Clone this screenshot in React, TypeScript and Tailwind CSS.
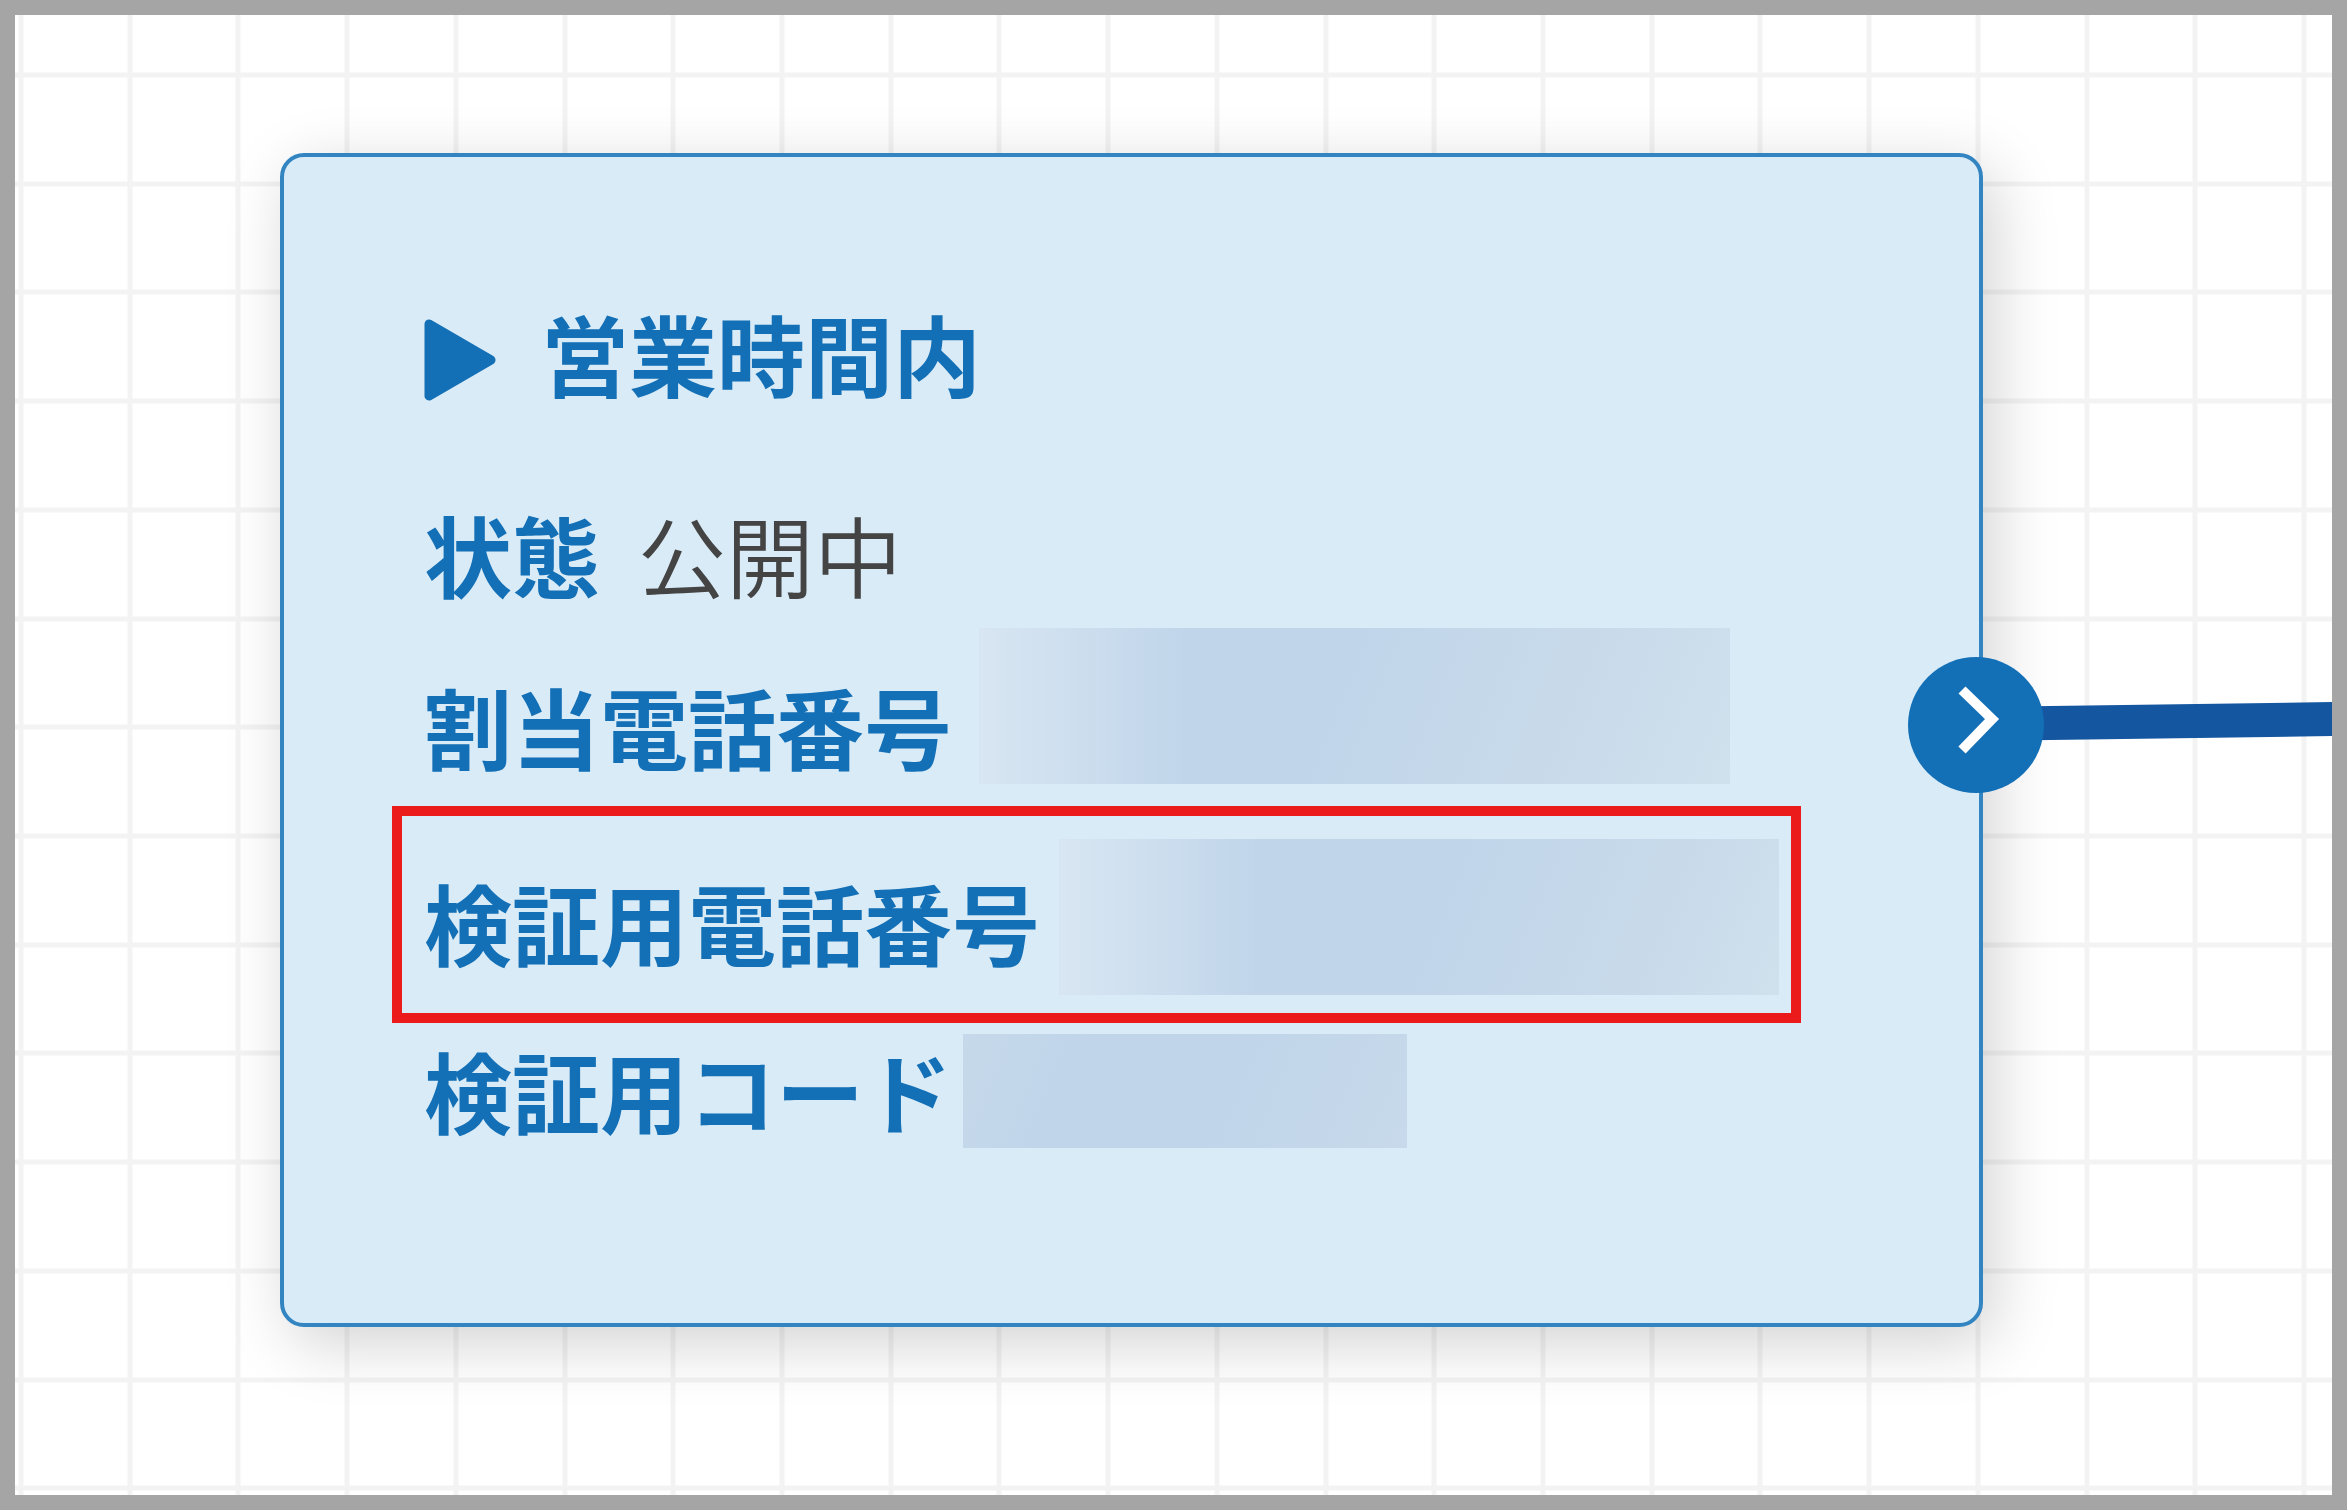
import type { ReactNode } from "react";

const GRID_STEP = 2283 / 21;
const verticals = Array.from({ length: 40 }, (_, i) => Math.round(6 + i * GRID_STEP));
const horizontals = Array.from({ length: 30 }, (_, i) => Math.round(60 + i * GRID_STEP));

function CanvasGrid() {
  return (
    <svg className="absolute inset-0 h-full w-full" aria-hidden="true">
      {verticals.map((x) => (
        <line key={x} x1={x} x2={x} y1="0" y2="100%" stroke="#f3f3f3" strokeWidth="5" />
      ))}
      {horizontals.map((y) => (
        <line key={y} x1="0" x2="100%" y1={y} y2={y} stroke="#f3f3f3" strokeWidth="5" />
      ))}
    </svg>
  );
}

function Label({ children }: { children: ReactNode }) {
  return <dt className="shrink-0 font-bold text-[#136fb6]">{children}</dt>;
}

function FlowNode() {
  return (
    <section className="relative min-w-0 flex-1 rounded-[24px] border-4 border-[#3385c2] bg-[#d9ebf7] pt-[140px] pb-[175px] pl-[140px] text-[88px] leading-[110px] whitespace-nowrap shadow-[11px_16px_65px_rgba(0,0,0,0.18)]">
      <h1 className="flex items-center gap-[43px] font-bold text-[#136fb6]">
        <svg className="mt-4 h-[82px] w-[74px]" viewBox="0 0 74 82" aria-hidden="true">
          <path
            d="M5 5 L67 41 L5 77 Z"
            fill="#136fb6"
            stroke="#136fb6"
            strokeWidth="9"
            strokeLinejoin="round"
          />
        </svg>
        営業時間内
      </h1>
      <dl className="mt-[91px]">
        <div className="flex gap-[38px]">
          <Label>状態</Label>
          <dd className="font-[350] text-[#444444]">公開中</dd>
        </div>
        <div className="mt-5 flex items-end gap-[27px]">
          <Label>
            <span className="block pb-1">割当電話番号</span>
          </Label>
          <dd className="h-[156px] w-[751px] bg-[linear-gradient(90deg,#d8e6f2_0%,#d8e6f200_28%),linear-gradient(112deg,#c0d5ea_45%,#c8daea_75%,#cfe1ed_100%)]" />
        </div>
        <div className="mt-[22px] -ml-8 flex w-fit items-center gap-[19px] border-10 border-[#ec1b1b] pt-[23px] pr-3 pb-[18px] pl-[22px]">
          <Label>
            <span className="block pt-2">検証用電話番号</span>
          </Label>
          <dd className="h-[156px] w-[720px] bg-[linear-gradient(90deg,#d8e6f2_0%,#d8e6f200_28%),linear-gradient(112deg,#c0d5ea_50%,#c8daea_80%,#cfe1ed_100%)]" />
        </div>
        <div className="mt-[11px] flex items-start gap-[11px]">
          <Label>検証用コード</Label>
          <dd className="h-[114px] w-[444px] bg-[linear-gradient(112deg,#c6d9ea_0%,#c0d5ea_25%,#c0d5ea_55%,#c7d9ea_100%)]" />
        </div>
      </dl>
      <button
        type="button"
        aria-label="次へ"
        className="absolute top-[500px] -right-[65px] z-10 flex size-[136px] items-center justify-center rounded-full bg-[#136fb6]"
      >
        <svg className="size-[136px]" viewBox="0 0 136 136" fill="none" aria-hidden="true">
          <path d="M54 33 L84 62 L54 93" stroke="#ffffff" strokeWidth="10" />
        </svg>
      </button>
    </section>
  );
}

export default function App() {
  return (
    <div className="flex min-h-screen bg-white pr-px pb-px font-['Noto_Sans_CJK_JP',sans-serif]">
      <main className="relative flex-1 overflow-hidden border-[15px] border-[#a5a5a5] bg-white">
        <CanvasGrid />
        <div className="relative flex pt-[138px] pb-[167px] pl-[265px]">
          <FlowNode />
          <svg
            className="relative mt-[543px] h-[50px] w-[349px] shrink-0"
            viewBox="0 0 349 50"
            preserveAspectRatio="none"
            aria-hidden="true"
          >
            <path d="M0 11 L349 6 L349 40 L0 45 Z" fill="#1457a0" />
          </svg>
        </div>
      </main>
    </div>
  );
}
